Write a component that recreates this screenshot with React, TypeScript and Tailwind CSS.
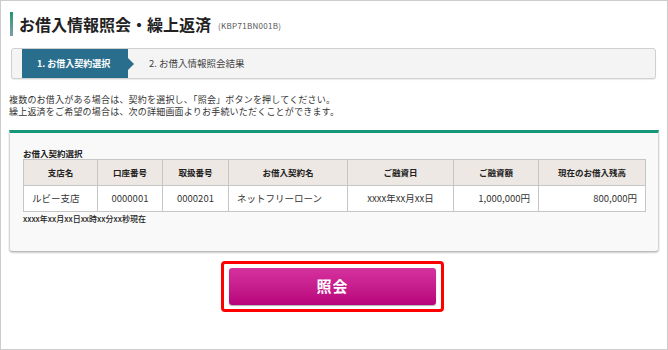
import React from "react";

const jp = { fontFamily: '"Noto Sans CJK JP", "Noto Sans", sans-serif' };

export default function App() {
  const cols = [
    { h: "支店名", w: 74, v: "ルビー支店", a: "text-left pl-[8px]" },
    { h: "口座番号", w: 65, v: "0000001", a: "text-center" },
    { h: "取扱番号", w: 66, v: "0000201", a: "text-center" },
    { h: "お借入契約名", w: 119, v: "ネットフリーローン", a: "text-left pl-[8px]" },
    { h: "ご融資日", w: 106, v: "xxxx年xx月xx日", a: "text-center" },
    { h: "ご融資額", w: 85, v: "1,000,000円", a: "text-right pr-[8px]" },
    { h: "現在のお借入残高", w: 107, v: "800,000円", a: "text-right pr-[8px]" },
  ];
  return (
    <div
      className="w-[668px] h-[350px] border border-[#cccccc] bg-white text-[#333] flex flex-col overflow-hidden"
      style={jp}
    >
      {/* Title */}
      <div className="flex items-center pt-[11px] pl-[9px]">
        <div className="w-[3px] h-[24px] bg-gradient-to-b from-[#14976a] to-[#7a9eae]" />
        <div className="ml-[6px] text-[16px] font-bold leading-[24px] text-[#222]">
          お借入情報照会・繰上返済
        </div>
        <div className="ml-[7px] mt-[3px] text-[8px] text-[#555] tracking-[0.3px]">(KBP71BN001B)</div>
      </div>

      {/* Steps */}
      <div className="mt-[12px] ml-[10px] mr-[11px] h-[31px] border border-[#d0d0d0] rounded-[3px] bg-[#f4f4f4] flex items-stretch pl-[10px] shadow-[0_1px_1px_rgba(0,0,0,0.08)]">
        <div className="relative w-[106px] bg-[#2a6e8e] text-white text-[9px] font-bold flex items-center pl-[15px]">
          1. お借入契約選択
          <div className="absolute right-[-6px] top-1/2 -translate-y-1/2 w-0 h-0 border-y-[6px] border-y-transparent border-l-[6px] border-l-[#2a6e8e]" />
        </div>
        <div className="flex items-center pl-[21px] text-[9.5px] text-[#444]">2. お借入情報照会結果</div>
      </div>

      {/* Description */}
      <div className="mt-[15px] ml-[8px] text-[9px] leading-[12px] tracking-[0.2px] text-[#333]">
        <div>複数のお借入がある場合は、契約を選択し、「照会」ボタンを押してください。</div>
        <div>繰上返済をご希望の場合は、次の詳細画面よりお手続いただくことができます。</div>
      </div>

      {/* Panel */}
      <div className="mt-[12px] ml-[8px] w-[650px] h-[122px] border-t-[3px] border-t-[#17977a] border-x border-b border-x-[#d4d4d4] border-b-[#bbbbbb] rounded-b-[4px] bg-[#f9f9f9] shadow-[0_1px_2px_rgba(0,0,0,0.2)] pl-[13px] pt-[15px]">
        <div className="text-[8.5px] font-bold leading-[11px] text-[#222]">お借入契約選択</div>
        <table className="border-collapse bg-white text-[9.5px] text-[#333]">
          <thead>
            <tr className="h-[26px] bg-[#ede8e3]">
              {cols.map((c) => (
                <th
                  key={c.h}
                  className="border border-[#c6c6c6] text-center font-bold text-[8.5px] text-[#222] p-0"
                  style={{ width: c.w }}
                >
                  {c.h}
                </th>
              ))}
            </tr>
          </thead>
          <tbody>
            <tr className="h-[26px]">
              {cols.map((c) => (
                <td key={c.h} className={`border border-[#c6c6c6] p-0 ${c.a}`}>
                  {c.v}
                </td>
              ))}
            </tr>
          </tbody>
        </table>
        <div className="mt-[2px] text-[8px] leading-[10px] font-medium text-[#222]">xxxx年xx月xx日xx時xx分xx秒現在</div>
      </div>

      {/* Button */}
      <div className="mt-[9px] flex justify-center pr-[3px]">
        <div className="border-[3px] border-[#ff0000] rounded-[4px] px-[5px] py-[4px]">
          <button
            className="w-[207px] h-[37px] rounded-[3px] bg-gradient-to-b from-[#d6309f] to-[#b8007b] text-white text-[15px] font-bold shadow-[0_1px_1px_rgba(0,0,0,0.3)] tracking-[1px]"
            style={jp}
          >
            照会
          </button>
        </div>
      </div>
    </div>
  );
}
